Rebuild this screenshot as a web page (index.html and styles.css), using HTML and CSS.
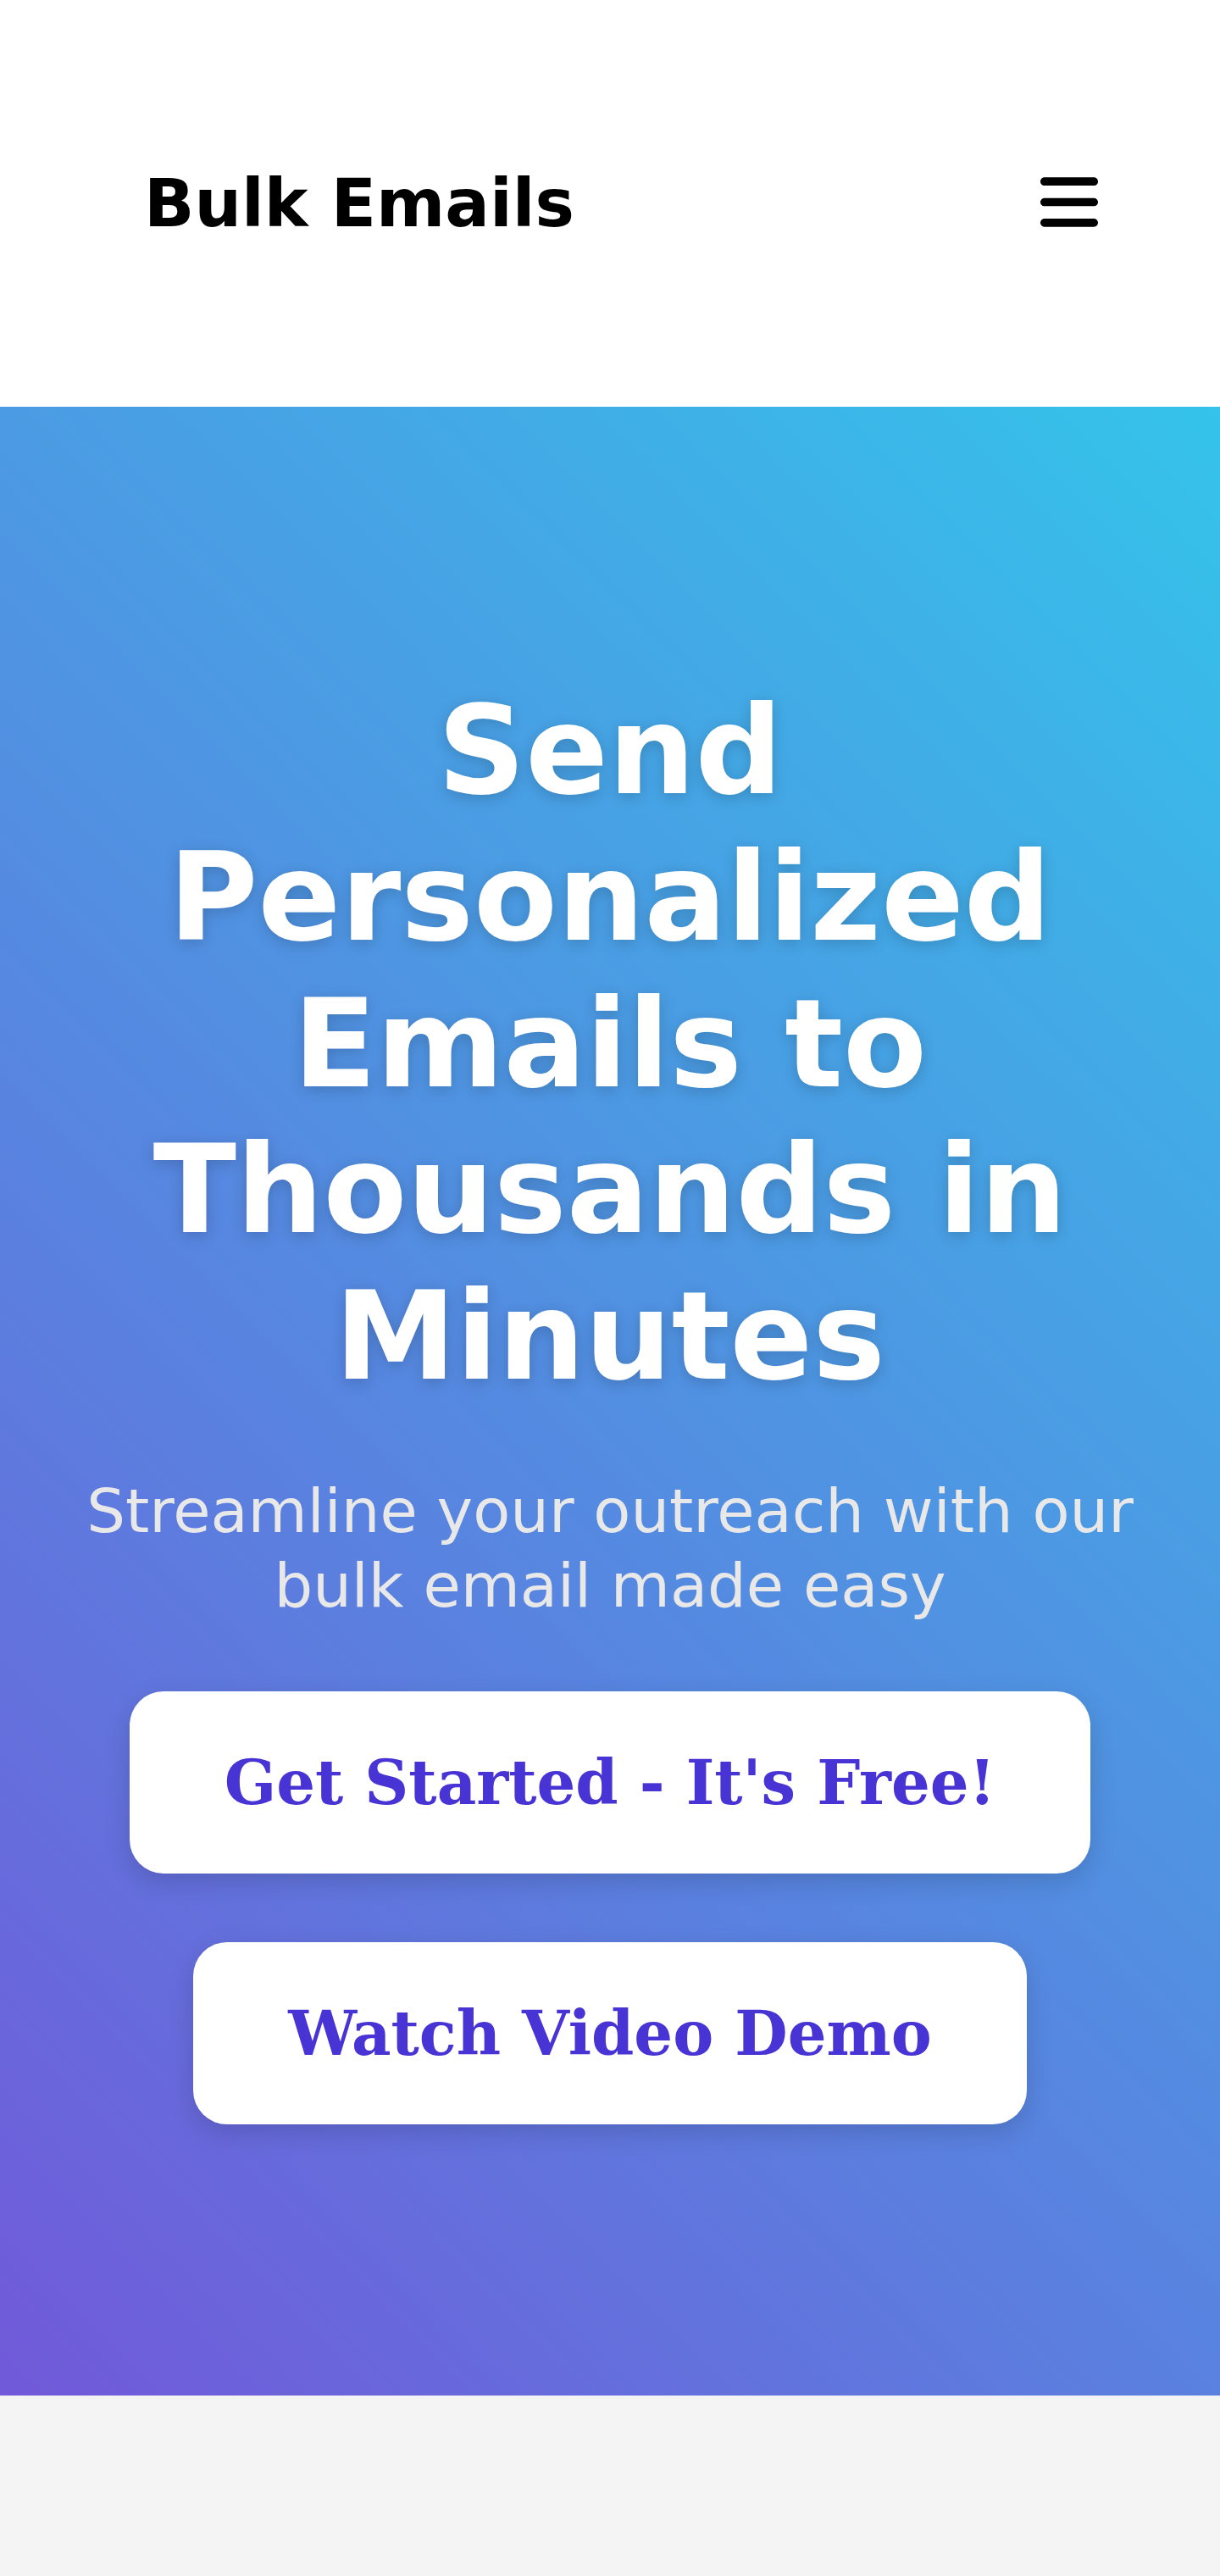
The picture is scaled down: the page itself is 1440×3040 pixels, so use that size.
FILE: index.html
```html
<!DOCTYPE html>
<html lang="en">
<head>
<meta charset="utf-8">
<title>Bulk Emails</title>
<link rel="stylesheet" href="styles.css">
</head>
<body>
<header class="site-header">
  <div class="logo">Bulk Emails</div>
  <button class="menu-toggle" aria-label="Open menu">
    <svg class="menu-icon" viewBox="0 0 448 512" width="68" height="78" aria-hidden="true">
      <path d="M0 96C0 78.3 14.3 64 32 64H416c17.7 0 32 14.3 32 32s-14.3 32-32 32H32C14.3 128 0 113.7 0 96zM0 256c0-17.7 14.3-32 32-32H416c17.7 0 32 14.3 32 32s-14.3 32-32 32H32c-17.7 0-32-14.3-32-32zM448 416c0 17.7-14.3 32-32 32H32c-17.7 0-32-14.3-32-32s14.3-32 32-32H416c17.7 0 32 14.3 32 32z"/>
    </svg>
  </button>
</header>
<section class="hero">
  <div class="hero-inner">
    <h1 class="hero-title">Send Personalized Emails to Thousands in Minutes</h1>
    <p class="hero-subtitle">Streamline your outreach with our bulk email made easy</p>
    <div class="hero-actions">
      <a class="btn" href="#">Get Started - It's Free!</a>
      <a class="btn" href="#">Watch Video Demo</a>
    </div>
  </div>
</section>
</body>
</html>
```
FILE: styles.css
```css
* {
  box-sizing: border-box;
}

html, body {
  margin: 0;
  padding: 0;
}

body {
  background: #f4f4f4;
  font-family: "DejaVu Sans", "Noto Sans", sans-serif;
  color: #000;
}

.site-header {
  height: 480px;
  background: #fff;
  display: flex;
  align-items: center;
  justify-content: space-between;
  padding: 0 144px 0 170px;
}

.logo {
  font-size: 78px;
  font-weight: bold;
  line-height: normal;
}

.menu-toggle {
  background: none;
  border: 0;
  padding: 0;
  margin: 0;
  display: flex;
  cursor: pointer;
  transform: translateY(-1.5px);
}

.menu-icon {
  display: block;
  fill: #000;
}

.hero {
  background: linear-gradient(45deg, #7159d9 0%, #34c3ea 100%);
  padding: 320px 80px;
  text-align: center;
}

.hero-inner {
  display: flex;
  flex-direction: column;
  align-items: center;
}

.hero-title {
  margin: 0 0 75px;
  font-size: 144px;
  line-height: 1.2;
  font-weight: bold;
  color: #fff;
  text-shadow: 0 4px 18px rgba(0, 0, 0, 0.18);
}

.hero-subtitle {
  margin: 0 0 81px;
  font-size: 72px;
  line-height: 88px;
  color: #e8e8e8;
}

.hero-actions {
  display: flex;
  flex-direction: column;
  align-items: center;
  gap: 81px;
}

.btn {
  display: inline-block;
  background: #fff;
  color: #4834d4;
  font-family: "DejaVu Serif", serif;
  font-weight: bold;
  font-size: 72px;
  line-height: normal;
  text-decoration: none;
  padding: 65px 112px;
  border-radius: 40px;
  box-shadow: 0 10px 30px rgba(0, 0, 0, 0.15);
}
```
